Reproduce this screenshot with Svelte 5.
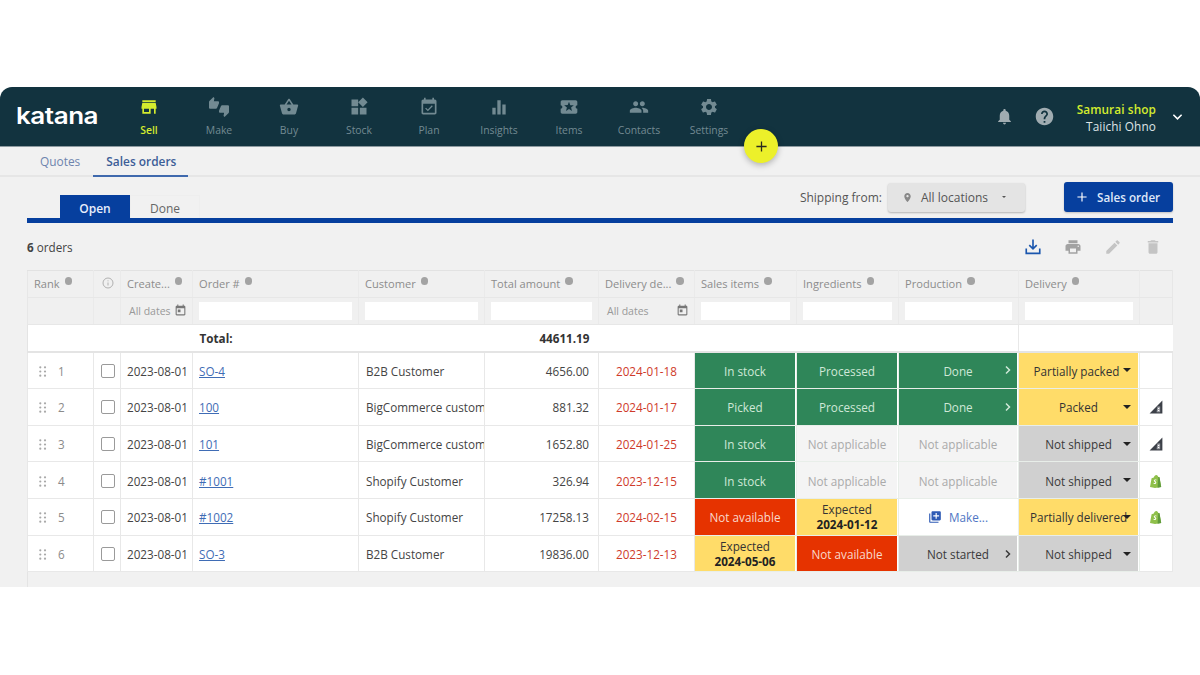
<script>
  const nav = [
    { label: 'Sell', active: true, d: 'M20 4H4v2h16V4zm1 10v-2l-1-5H4l-1 5v2h1v6h10v-6h4v6h2v-6h1zm-9 4H6v-4h6v4z' },
    { label: 'Make', d: 'M12 6c0-.55-.45-1-1-1H5.82l.66-3.18.02-.23c0-.31-.13-.59-.33-.8L5.38 0 .44 4.94C.17 5.21 0 5.59 0 6v6.5c0 .83.67 1.5 1.5 1.5h6.75c.62 0 1.15-.38 1.38-.91l2.26-5.29c.07-.17.11-.36.11-.55V6zm10.5 4h-6.75c-.62 0-1.15.38-1.38.91l-2.26 5.29c-.07.17-.11.36-.11.55V18c0 .55.45 1 1 1h5.18l-.66 3.18-.02.24c0 .31.13.59.33.8l.79.78 4.94-4.94c.27-.27.44-.65.44-1.06v-6.5c0-.83-.67-1.5-1.5-1.5z' },
    { label: 'Buy', d: 'M17.21 9l-4.38-6.56c-.19-.28-.51-.42-.83-.42-.32 0-.64.14-.83.43L6.79 9H2c-.55 0-1 .45-1 1 0 .09.01.18.04.27l2.54 9.27c.23.84 1 1.46 1.92 1.46h13c.92 0 1.69-.62 1.93-1.46l2.54-9.27L23 10c0-.55-.45-1-1-1h-4.79zM9 9l3-4.4L15 9H9zm3 8c-1.1 0-2-.9-2-2s.9-2 2-2 2 .9 2 2-.9 2-2 2z' },
    { label: 'Stock', d: 'M13 13v8h8v-8h-8zM3 21h8v-8H3v8zM3 3v8h8V3H3zm13.66-2.34L11 6.34 16.66 12l5.66-5.66L16.66.66z' },
    { label: 'Plan', d: 'M16.53 11.06L15.47 10l-4.88 4.88-2.12-2.12-1.06 1.06L10.59 17l5.94-5.94zM19 3h-1V1h-2v2H8V1H6v2H5c-1.11 0-1.99.9-1.99 2L3 19c0 1.1.89 2 2 2h14c1.1 0 2-.9 2-2V5c0-1.1-.9-2-2-2zm0 16H5V8h14v11z' },
    { label: 'Insights', d: 'M4 13h4v8H4zM10 4h4v17h-4zM16 9h4v12h-4z' },
    { label: 'Items', d: 'M20 12c0-1.1.9-2 2-2V6c0-1.1-.9-2-2-2H4c-1.1 0-1.99.9-1.99 2v4c1.1 0 1.99.9 1.99 2s-.89 2-2 2v4c0 1.1.9 2 2 2h16c1.1 0 2-.9 2-2v-4c-1.1 0-2-.9-2-2zm-4.42 4.8L12 14.5l-3.58 2.3 1.08-4.12-3.29-2.69 4.24-.25L12 5.8l1.54 3.95 4.24.25-3.29 2.69 1.09 4.11z' },
    { label: 'Contacts', d: 'M16 11c1.66 0 2.99-1.34 2.99-3S17.66 5 16 5c-1.66 0-3 1.34-3 3s1.34 3 3 3zm-8 0c1.66 0 2.99-1.34 2.99-3S9.66 5 8 5C6.34 5 5 6.34 5 8s1.34 3 3 3zm0 2c-2.33 0-7 1.17-7 3.5V19h14v-2.5c0-2.33-4.67-3.5-7-3.5zm8 0c-.29 0-.62.02-.97.05 1.16.84 1.97 1.97 1.97 3.45V19h6v-2.5c0-2.33-4.67-3.5-7-3.5z' },
    { label: 'Settings', d: 'M19.14 12.94c.04-.3.06-.61.06-.94 0-.32-.02-.64-.07-.94l2.03-1.58c.18-.14.23-.41.12-.61l-1.92-3.32c-.12-.22-.37-.29-.59-.22l-2.39.96c-.5-.38-1.03-.7-1.62-.94l-.36-2.54c-.04-.24-.24-.41-.48-.41h-3.84c-.24 0-.43.17-.47.41l-.36 2.54c-.59.24-1.13.57-1.62.94l-2.39-.96c-.22-.08-.47 0-.59.22L2.74 8.87c-.12.21-.08.47.12.61l2.03 1.58c-.05.3-.09.63-.09.94s.02.64.07.94l-2.03 1.58c-.18.14-.23.41-.12.61l1.92 3.32c.12.22.37.29.59.22l2.39-.96c.5.38 1.03.7 1.62.94l.36 2.54c.05.24.24.41.48.41h3.84c.24 0 .44-.17.47-.41l.36-2.54c.59-.24 1.13-.56 1.62-.94l2.39.96c.22.08.47 0 .59-.22l1.92-3.32c.12-.22.07-.47-.12-.61l-2.01-1.58zM12 15.6c-1.98 0-3.6-1.62-3.6-3.6s1.62-3.6 3.6-3.6 3.6 1.62 3.6 3.6-1.62 3.6-3.6 3.6z' }
  ];
  const calendar = 'M19 3h-1V1h-2v2H8V1H6v2H5c-1.11 0-1.99.9-1.99 2L3 19c0 1.1.89 2 2 2h14c1.1 0 2-.9 2-2V5c0-1.1-.9-2-2-2zm0 16H5V8h14v11zM7 10h5v5H7z';
  const heads = [
    { t: 'Rank', c: 'c-rank', info: true }, { t: '', c: 'c-check', circle: true }, { t: 'Create...', c: 'c-date', info: true },
    { t: 'Order #', info: true }, { t: 'Customer', info: true }, { t: 'Total amount', info: true },
    { t: 'Delivery de...', info: true }, { t: 'Sales items', info: true }, { t: 'Ingredients', info: true },
    { t: 'Production', info: true }, { t: 'Delivery', info: true }, { t: '' }
  ];
  const filters = ['', '', 'date', 'input', 'input', 'input', 'date', 'input', 'input', 'input', 'input', ''];
  const rows = [
    { n: 1, o: 'SO-4', cu: 'B2B Customer', a: '4656.00', d: '2024-01-18',
      s: { k: 'green', t: 'In stock' }, i: { k: 'green', t: 'Processed' }, p: { k: 'green', t: 'Done', arrow: true },
      del: { k: 'yellow', t: 'Partially packed', tight: true }, src: '' },
    { n: 2, o: '100', cu: 'BigCommerce customer', a: '881.32', d: '2024-01-17',
      s: { k: 'green', t: 'Picked' }, i: { k: 'green', t: 'Processed' }, p: { k: 'green', t: 'Done', arrow: true },
      del: { k: 'yellow', t: 'Packed' }, src: 'bc' },
    { n: 3, o: '101', cu: 'BigCommerce customer', a: '1652.80', d: '2024-01-25',
      s: { k: 'green', t: 'In stock' }, i: { k: 'na', t: 'Not applicable' }, p: { k: 'na', t: 'Not applicable' },
      del: { k: 'gray', t: 'Not shipped' }, src: 'bc' },
    { n: 4, o: '#1001', cu: 'Shopify Customer', a: '326.94', d: '2023-12-15',
      s: { k: 'green', t: 'In stock' }, i: { k: 'na', t: 'Not applicable' }, p: { k: 'na', t: 'Not applicable' },
      del: { k: 'gray', t: 'Not shipped' }, src: 'shop' },
    { n: 5, o: '#1002', cu: 'Shopify Customer', a: '17258.13', d: '2024-02-15',
      s: { k: 'red', t: 'Not available' }, i: { k: 'yellow', t: 'Expected', b: '2024-01-12' }, p: { k: 'make', t: 'Make...' },
      del: { k: 'yellow', t: 'Partially delivered', tight: true, over: true }, src: 'shop' },
    { n: 6, o: 'SO-3', cu: 'B2B Customer', a: '19836.00', d: '2023-12-13',
      s: { k: 'yellow', t: 'Expected', b: '2024-05-06' }, i: { k: 'red', t: 'Not available' }, p: { k: 'gray', t: 'Not started', arrow: true },
      del: { k: 'gray', t: 'Not shipped' }, src: '' }
  ];
</script>

{#snippet icon(d, cls = '')}
  <svg class={cls} viewBox="0 0 24 24" aria-hidden="true"><path {d} /></svg>
{/snippet}

{#snippet pill(v)}
  <div class="pill {v.k}" class:arrowed={v.arrow}>
    {#if v.k === 'make'}
      <svg class="make-ic" viewBox="0 0 24 24"><path d="M4 6H2v14c0 1.1.9 2 2 2h14v-2H4V6zm16-4H8c-1.1 0-2 .9-2 2v12c0 1.1.9 2 2 2h12c1.1 0 2-.9 2-2V4c0-1.1-.9-2-2-2zm-1 9h-4v4h-2v-4H9V9h4V5h2v4h4v2z" /></svg>
      <span>{v.t}</span>
    {:else if v.b}
      <span class="two"><span>{v.t}</span><b>{v.b}</b></span>
    {:else}
      <span>{v.t}</span>
    {/if}
    {#if v.arrow}
      <svg class="chev" viewBox="0 0 10 10"><path d="M3 1.5 6.5 5 3 8.5" /></svg>
    {/if}
  </div>
{/snippet}

<div class="app">
  <header class="top">
    <div class="logo">katana</div>
    <nav class="nav">
      {#each nav as n}
        <div class="nav-item" class:active={n.active}>
          {@render icon(n.d, 'nav-ic')}
          <span>{n.label}</span>
        </div>
      {/each}
    </nav>
    <div class="top-right">
      {@render icon('M12 22c1.1 0 2-.9 2-2h-4c0 1.1.9 2 2 2zm6-6v-5c0-3.07-1.63-5.64-4.5-6.32V4c0-.83-.67-1.5-1.5-1.5s-1.5.67-1.5 1.5v.68C7.64 5.36 6 7.92 6 11v5l-2 2v1h16v-1l-2-2z', 'tr-ic bell')}
      {@render icon('M12 2C6.48 2 2 6.48 2 12s4.48 10 10 10 10-4.48 10-10S17.52 2 12 2zm1 17h-2v-2h2v2zm2.07-7.75l-.9.92C13.45 12.9 13 13.5 13 15h-2v-.5c0-1.1.45-2.1 1.17-2.83l1.24-1.26c.37-.36.59-.86.59-1.41 0-1.1-.9-2-2-2s-2 .9-2 2H8c0-2.21 1.79-4 4-4s4 1.79 4 4c0 .88-.36 1.68-.93 2.25z', 'tr-ic help')}
      <div class="user"><b>Samurai shop</b><span>Taiichi Ohno</span></div>
      <svg class="user-chev" viewBox="0 0 12 8"><path d="M1.5 1.5 6 6l4.5-4.5" /></svg>
    </div>
  </header>

  <div class="fab"><svg viewBox="0 0 14 14"><path d="M7 1.5v11M1.5 7h11" /></svg></div>

  <div class="subnav">
    <div class="sub">Quotes</div>
    <div class="sub on">Sales orders</div>
  </div>

  <main class="main">
    <div class="toolbar">
      <div class="tabs">
        <div class="tab on">Open</div>
        <div class="tab">Done</div>
      </div>
      <div class="actions">
        <span class="ship">Shipping from:</span>
        <div class="loc">
          {@render icon('M12 2C8.13 2 5 5.13 5 9c0 5.25 7 13 7 13s7-7.75 7-13c0-3.87-3.13-7-7-7zm0 9.5c-1.38 0-2.5-1.12-2.5-2.5s1.12-2.5 2.5-2.5 2.5 1.12 2.5 2.5-1.12 2.5-2.5 2.5z', 'pin')}
          <span>All locations</span>
          <i class="caret small"></i>
        </div>
        <div class="primary"><svg viewBox="0 0 12 12"><path d="M6 .5v11M.5 6h11" /></svg><span>Sales order</span></div>
      </div>
    </div>
    <div class="rule"></div>

    <div class="count-row">
      <div class="count"><b>6</b> orders</div>
      <div class="tools">
        <svg class="tool blue" viewBox="0 0 24 24"><path d="M12 2v12M7 9.5l5 5 5-5" class="st" /><path d="M3 14v6.5h18V14" class="st" /></svg>
        {@render icon('M19 8H5c-1.66 0-3 1.34-3 3v6h4v4h12v-4h4v-6c0-1.66-1.34-3-3-3zm-3 11H8v-5h8v5zm3-7c-.55 0-1-.45-1-1s.45-1 1-1 1 .45 1 1-.45 1-1 1zm-1-9H6v4h12V3z', 'tool')}
        {@render icon('M3 17.25V21h3.75L17.81 9.94l-3.75-3.75L3 17.25zM20.71 7.04c.39-.39.39-1.02 0-1.41l-2.34-2.34c-.39-.39-1.02-.39-1.41 0l-1.83 1.83 3.75 3.75 1.83-1.83z', 'tool light')}
        {@render icon('M6 19c0 1.1.9 2 2 2h8c1.1 0 2-.9 2-2V7H6v12zM19 4h-3.5l-1-1h-5l-1 1H5v2h14V4z', 'tool light')}
      </div>
    </div>

    <table class="grid">
      <colgroup>
        <col style="width:66px" /><col style="width:27px" /><col style="width:72px" /><col style="width:166px" />
        <col style="width:126px" /><col style="width:114px" /><col style="width:96px" /><col style="width:102px" />
        <col style="width:102px" /><col style="width:120px" /><col style="width:121px" /><col style="width:33px" />
      </colgroup>
      <thead>
        <tr class="hrow">
          {#each heads as h}
            <th class={h.c}>
              {#if h.circle}
                <svg class="circle" viewBox="0 0 12 12"><circle cx="6" cy="6" r="5" /><path d="M6 5.5v3M6 3.4v.9" /></svg>
              {:else}
                {h.t}{#if h.info}<i class="dot"></i>{/if}
              {/if}
            </th>
          {/each}
        </tr>
        <tr class="frow">
          {#each filters as f}
            <th>
              {#if f === 'input'}
                <div class="finput"></div>
              {:else if f === 'date'}
                <div class="fdate"><span>All dates</span>{@render icon(calendar, 'cal')}</div>
              {/if}
            </th>
          {/each}
        </tr>
      </thead>
      <tbody>
        <tr class="total">
          <td colspan="3"></td>
          <td><b>Total:</b></td>
          <td></td>
          <td class="num"><b>44611.19</b></td>
          <td colspan="4"></td>
          <td colspan="2" class="lined"></td>
        </tr>
        {#each rows as r}
          <tr class="row">
            <td class="rank">
              <svg class="drag" viewBox="0 0 8 11"><g><circle cx="1.3" cy="1.3" r="1.1" /><circle cx="6" cy="1.3" r="1.1" /><circle cx="1.3" cy="5.5" r="1.1" /><circle cx="6" cy="5.5" r="1.1" /><circle cx="1.3" cy="9.7" r="1.1" /><circle cx="6" cy="9.7" r="1.1" /></g></svg>
              <span>{r.n}</span>
            </td>
            <td class="chk"><div class="box"></div></td>
            <td class="created">2023-08-01</td>
            <td><span class="link">{r.o}</span></td>
            <td class="cust"><div class="clip">{r.cu}</div></td>
            <td class="num">{r.a}</td>
            <td class="due">{r.d}</td>
            <td class="st-cell">{@render pill(r.s)}</td>
            <td class="st-cell">{@render pill(r.i)}</td>
            <td class="st-cell">{@render pill(r.p)}</td>
            <td class="st-cell">
              <div class="pill {r.del.k} del" class:tight={r.del.tight} class:over={r.del.over}>
                <span>{r.del.t}</span><i class="caret"></i>
              </div>
            </td>
            <td class="src">
              {#if r.src === 'bc'}
                <svg viewBox="0 0 14 14" class="srcic"><path d="M13.4.6v13H.6z" fill="#3c4048" /><path d="M8.4 6.4h2.8v5.8H7.6z" fill="#9a9ca2" /><path d="M9 8h1.2v.9H9zM9 10h1.2v.9H9z" fill="#fff" /></svg>
              {:else if r.src === 'shop'}
                <svg viewBox="0 0 14 14" class="srcic"><path d="M2.6 4.2 4.8 3.4C5.3 1.9 6.2 1 7.3 1c1.1 0 1.7 1 2 2l1.2.3L12.2 13 6 14l-5-1z" fill="#8fc04a" /><path d="M9.3 3 10.5 3.3 12.2 13 8.6 13.8z" fill="#5f9a3c" /><path d="M7.6 5.7c-.3-.2-.8-.3-1.2-.3-1 0-1.6.6-1.6 1.3 0 1 1.5 1.2 1.5 1.9 0 .3-.2.5-.6.5-.4 0-.9-.2-1.1-.4l-.2.9c.3.2.8.4 1.3.4 1 0 1.6-.6 1.6-1.5 0-1.1-1.5-1.3-1.5-1.9 0-.2.2-.4.6-.4.3 0 .6.1.9.2z" fill="#fff" /></svg>
              {/if}
            </td>
          </tr>
        {/each}
      </tbody>
    </table>
    <div class="foot"></div>
  </main>
</div>

<style>
  :global(body) { background: #fff; margin: 0; }
  * { box-sizing: border-box; }
  .app {
    position: relative;
    margin-top: 87px;
    height: 500px;
    overflow: hidden;
    background: #f1f1f1;
    font-family: "Open Sans", "Liberation Sans", sans-serif;
    font-size: 11.7px;
    color: #444;
    border-radius: 12px 12px 0 0;
  }
  .top {
    height: 60px;
    background: #12333f;
    display: flex;
    align-items: stretch;
    padding-left: 16px;
    border-bottom: 1px solid #8d9aa0;
  }
  .logo {
    width: 98px;
    align-self: center;
    margin-top: -1px;
    font-family: "Inter", sans-serif;
    font-weight: 600;
    font-size: 23px;
    letter-spacing: -.4px;
    color: #fff;
    transform: scaleX(1.13);
    transform-origin: left center;
  }
  .nav { display: flex; }
  .nav-item {
    width: 70px;
    display: flex;
    flex-direction: column;
    align-items: center;
    padding-top: 10px;
    color: #728a92;
    font-size: 10.4px;
    line-height: 14px;
  }
  .nav-item span { margin-top: 6px; }
  .nav-item.active { color: #d4ec2e; font-weight: 600; }
  svg { display: block; fill: currentColor; }
  :global(.nav-ic) { width: 20px; height: 20px; }
  .top-right {
    margin-left: auto;
    display: flex;
    align-items: center;
    padding-right: 17px;
  }
  :global(.tr-ic) { color: #a0acb1; }
  :global(.bell) { width: 19px; height: 19px; margin-right: 20px; }
  :global(.help) { width: 21px; height: 21px; margin-right: 22px; }
  .user {
    display: flex;
    flex-direction: column;
    align-items: flex-end;
    line-height: 17px;
    font-size: 11.8px;
    color: #dfe5e7;
    letter-spacing: .1px;
    padding-top: 2px;
  }
  .user b { color: #d4ec2e; font-weight: 600; }
  .user-chev { width: 11px; height: 8px; margin-left: 16px; fill: none; stroke: #fff; stroke-width: 1.7; }
  .fab {
    position: absolute;
    left: 744px;
    top: 42px;
    width: 34px;
    height: 34px;
    border-radius: 50%;
    background: #ecf02a;
    box-shadow: 0 2px 6px rgba(0, 0, 0, .28);
    display: flex;
    align-items: center;
    justify-content: center;
  }
  .fab svg { width: 13px; height: 13px; fill: none; stroke: #2a2a20; stroke-width: 1.4; }
  .subnav {
    height: 30px;
    display: flex;
    padding-left: 27px;
    border-bottom: 2px solid #e6e6e6;
  }
  .sub {
    padding: 0 13px;
    line-height: 28px;
    color: #6e84ad;
    font-size: 11.9px;
    height: 30px;
    white-space: nowrap;
  }
  .sub.on {
    color: #3c5d97;
    font-weight: 600;
    border-bottom: 2px solid #3f69ad;
    width: 95px;
  }
  .main { padding: 0 27px; }
  .toolbar {
    height: 41px;
    display: flex;
    justify-content: space-between;
    align-items: flex-end;
  }
  .tabs { display: flex; padding-left: 33px; }
  .tab {
    width: 70px;
    height: 23px;
    text-align: center;
    line-height: 25px;
    font-size: 12px;
    color: #666;
    border: 1px solid #eeeeee;
    border-bottom: 0;
  }
  .tab.on { background: #063f9e; color: #e8eefc; font-weight: 600; border-color: #063f9e; }
  .actions {
    display: flex;
    align-items: center;
    align-self: flex-start;
    margin-top: 5px;
  }
  .ship { color: #555; font-size: 12px; margin-right: 6px; }
  .loc {
    width: 137px;
    height: 29px;
    display: flex;
    align-items: center;
    padding-left: 14px;
    background: #e4e4e4;
    border-radius: 3px;
    box-shadow: 0 1px 2px rgba(0, 0, 0, .25);
    color: #555;
    font-size: 12px;
    font-weight: 500;
    margin-right: 39px;
  }
  :global(.pin) { width: 11px; height: 11px; color: #888; margin-right: 8px; }
  .caret {
    display: block;
    width: 0;
    height: 0;
    border-left: 4.5px solid transparent;
    border-right: 4.5px solid transparent;
    border-top: 4.5px solid #222;
  }
  .caret.small {
    border-left-width: 2.5px;
    border-right-width: 2.5px;
    border-top: 2.5px solid #555;
    margin-left: 14px;
  }
  .primary {
    width: 109px;
    height: 30px;
    display: flex;
    align-items: center;
    padding-left: 13px;
    background: #063f9e;
    color: #dfe8f8;
    border-radius: 3px;
    font-weight: 600;
    box-shadow: 0 1px 2px rgba(0, 0, 0, .2);
  }
  .primary svg { width: 10px; height: 10px; fill: none; stroke: #fff; stroke-width: 1.4; margin-right: 10px; }
  .rule { height: 5px; background: #063f9e; }
  .count-row {
    height: 47px;
    display: flex;
    justify-content: space-between;
    align-items: center;
  }
  .count b { font-weight: 700; }
  .tools { display: flex; gap: 22px; margin-right: 11px; }
  :global(.tool) { width: 18px; height: 18px; color: #a2a2a2; }
  :global(.tool.light) { color: #c4c4c4; }
  .tool.blue { color: #1a56ae; fill: none; }
  .tool .st { fill: none; stroke: #1a56ae; stroke-width: 2.2; }
  .grid {
    table-layout: fixed;
    width: 1145px;
    border-collapse: collapse;
    border-left: 1px solid #e4e4e4;
  }
  th {
    font-weight: 400;
    text-align: left;
    color: #8c8c8c;
    font-size: 11.1px;
    padding: 0 6px;
    white-space: nowrap;
    border: 1px solid #e7e7e7;
    border-top: 1px solid #e2e2e2;
    background: #f0f0f0;
  }
  th:not(:last-child) { border-right-color: #eaeaea; }
  .hrow { height: 27px; }
  .hrow th { padding-bottom: 2px; }
  .frow { height: 27px; }
  .dot {
    display: inline-block;
    width: 7.5px;
    height: 7.5px;
    border-radius: 50%;
    background: #a3a3a3;
    margin-left: 5px;
    vertical-align: 3px;
  }
  .circle { width: 12px; height: 12px; fill: none; stroke: #b0b0b0; stroke-width: 1; margin-left: 2px; }
  .finput { height: 18px; background: #fff; }
  .fdate { display: flex; justify-content: space-between; align-items: center; color: #999; font-size: 10.5px; margin-right: -1px; margin-left: 2px; padding-bottom: 1px; }
  :global(.cal) { width: 13px; height: 13px; color: #777; }
  td { padding: 0 7px; background: #fff; border: 1px solid #e8e8e8; white-space: nowrap; }
  .total { height: 27px; }
  .total td { border-left: 0; border-right: 0; color: #333; border-bottom: 2px solid #e4e4e4; }
  .total b { font-weight: 700; }
  .total .lined { border-left: 1px solid #e8e8e8; }
  .num { text-align: right; padding-right: 9px; }
  .row { height: 36.67px; }
  .row td { padding-top: 1px; }
  .rank { color: #8b8b8b; padding-left: 11px; }
  .rank svg { display: inline-block; width: 8px; height: 11px; fill: #a8a8a8; margin-right: 8px; vertical-align: -1px; }
  .chk { padding: 0 0 0 7px; }
  .box { width: 14px; height: 14px; border: 1.5px solid #9a9a9a; border-radius: 2px; background: #fff; }
  .created { color: #444; padding-left: 6px; }
  td:nth-child(4) { padding-left: 6px; }
  .cust { padding: 0 0 0 7px; }
  .row .cust { padding-right: 0; }
  .link { color: #3f6cb5; text-decoration: underline; }
  .clip { overflow: hidden; }
  .due { color: #cf3a2a; text-align: center; padding: 0; }
  .row .st-cell { padding: 0 1px 0 0; border-color: #e8eee9; }
  .pill {
    position: relative;
    height: 35.6px;
    display: flex;
    align-items: center;
    justify-content: center;
    text-align: center;
    padding-top: 1px;
  }
  .green { background: #2f8659; color: #cfe8d8; }
  .yellow { background: #ffdc69; color: #333; }
  .gray { background: #d0d0d0; color: #3a3a3a; }
  .na { background: #f4f4f4; color: #aaa; }
  .red { background: #e63300; color: #f9d9cc; }
  .make { background: #fff; color: #4f76c4; font-weight: 500; }
  .make-ic { width: 14px; height: 14px; fill: #2f5bb5; margin-right: 7px; }
  .two { display: flex; flex-direction: column; line-height: 15px; }
  .two b { color: #222; font-weight: 700; }
  .chev { position: absolute; right: 4px; top: 50%; margin-top: -5px; width: 10px; height: 10px; fill: none; stroke: currentColor; stroke-width: 1.5; }
  .del .caret { position: absolute; right: 7px; top: 50%; margin-top: -2px; }
  .del.tight span { margin-right: 4px; }
  .del.over span { margin-right: 0; }
  .src { padding: 0 0 0 9px; }
  .srcic { width: 14px; height: 14px; }
  .foot { height: 20px; border-left: 1px solid #e4e4e4; }
</style>
